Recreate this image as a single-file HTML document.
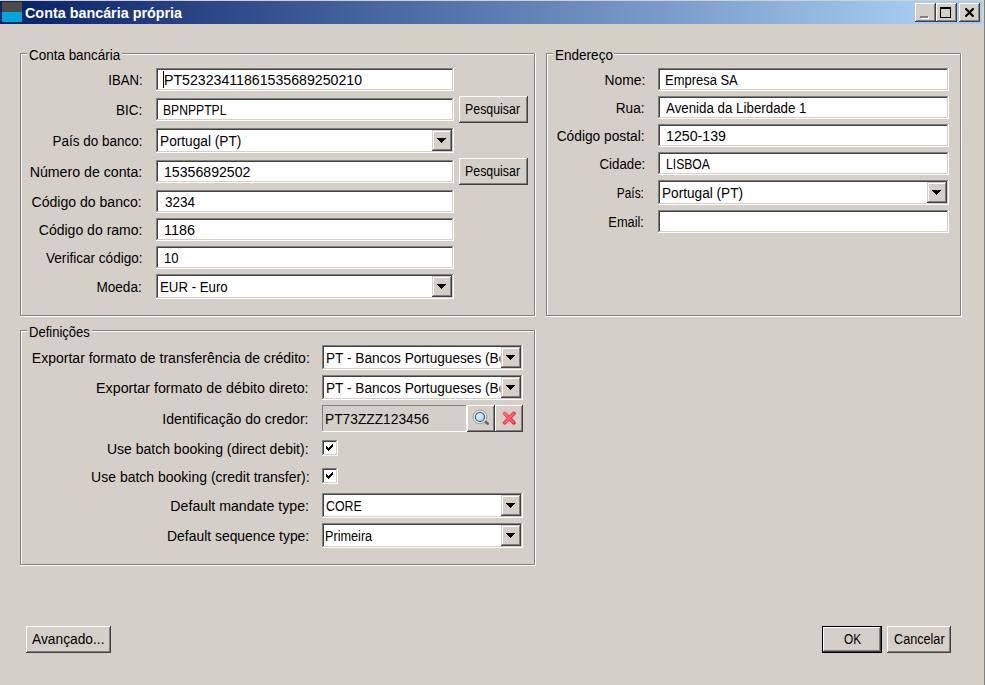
<!DOCTYPE html>
<html lang="pt">
<head>
<meta charset="utf-8">
<title>Conta bancária própria</title>
<style>
html,body{margin:0;padding:0;}
body{width:985px;height:685px;overflow:hidden;background:#d4d0c8;position:relative;
  font-family:"Liberation Sans",Arial,sans-serif;font-size:14px;color:#000;}
*{box-sizing:border-box;}
div,i,b,svg{position:absolute;}
#edge{left:984px;top:0;width:1px;height:685px;background:#808080;}
#title{left:0;top:1px;width:982px;height:23px;background:linear-gradient(to right,#0a246a 0,#0a246a 22px,#a6caf0 915px,#a6caf0 100%);}
#ticon{left:2px;top:1px;width:20px;height:20px;background:#00a5dd;}
#ticon i{left:0;top:0;width:20px;height:10px;background:#4c4c4a;}
.t{white-space:nowrap;}
.tt{color:#fff;font-weight:bold;font-size:15px;}
.cb,.btn{background:#d4d0c8;box-shadow:inset -1px -1px #404040,inset 1px 1px #fff,inset -2px -2px #808080,inset 2px 2px #d4d0c8;}
.cb{top:2px;width:21px;height:19px;}
.mn{left:5px;top:13px;width:8px;height:2px;background:#808080;z-index:2;}
.mn2{left:6px;top:14px;width:8px;height:2px;background:#fff;z-index:1;}
.mx{left:4px;top:4px;width:11px;height:11px;border:1px solid #000;border-top-width:2px;}
.x{left:6px;top:5px;}
.grp{box-shadow:inset -1px -1px #fff,inset 1px 1px #808080,inset -2px -2px #808080,inset 2px 2px #fff;}
.gl{background:#d4d0c8;height:16px;}
.inp,.sel,.chk{background:#fff;box-shadow:inset -1px -1px #fff,inset 1px 1px #808080,inset -2px -2px #d4d0c8,inset 2px 2px #404040;}
.sel{height:25px;}
.sel b{right:2px;top:2px;width:20px;height:21px;background:#d4d0c8;box-shadow:inset -1px -1px #404040,inset 1px 1px #d4d0c8,inset -2px -2px #808080,inset 2px 2px #fff;}
.sel b svg{left:5px;top:8px;}
.okb{background:#000;}
.ro{height:27px;box-shadow:inset -1px -1px #fff,inset 1px 1px #808080;}
.chk{width:16px;height:16px;}
.chk svg{left:4px;top:4px;}
#caret{width:1px;background:#000;}
</style>
</head>
<body>
<div id="title"><div id="ticon"><i></i></div>
<div class="cb" style="left:915px"><i class="mn"></i><i class="mn2"></i></div>
<div class="cb" style="left:936px"><i class="mx"></i></div>
<div class="cb" style="left:959px"><svg class="x" width="9" height="9" viewBox="0 0 9 9"><path d="M1.1 1.1L7.9 7.9M7.9 1.1L1.1 7.9" stroke="#000" stroke-width="2.1" stroke-linecap="square" fill="none"/></svg></div>
</div>
<div id="ttl" class="t tt" style="left:25.22px;top:1px;height:23px;line-height:23px;transform:scaleX(0.9567);transform-origin:left center;">Conta bancária própria</div>
<div id="edge"></div>
<div class="grp" style="left:20px;top:53px;width:516px;height:264px;"></div>
<div class="gl" style="left:27px;top:46px;width:95px;"></div>
<div id="g1" class="t" style="left:29.44px;top:47px;height:16px;line-height:16px;transform:scaleX(0.9608);transform-origin:left center;">Conta bancária</div>
<div class="grp" style="left:546px;top:53px;width:416px;height:264px;"></div>
<div class="gl" style="left:553px;top:46px;width:61px;"></div>
<div id="g2" class="t" style="left:554.85px;top:47px;height:16px;line-height:16px;transform:scaleX(0.9664);transform-origin:left center;">Endereço</div>
<div class="grp" style="left:20px;top:330px;width:516px;height:236px;"></div>
<div class="gl" style="left:27px;top:323px;width:65px;"></div>
<div id="g3" class="t" style="left:29.27px;top:324px;height:16px;line-height:16px;transform:scaleX(0.9312);transform-origin:left center;">Definições</div>
<div id="l1" class="t" style="right:842.93px;top:69px;height:22px;line-height:22px;transform:scaleX(0.9370);transform-origin:right center;">IBAN:</div>
<div id="l2" class="t" style="right:842.66px;top:99px;height:22px;line-height:22px;transform:scaleX(0.9636);transform-origin:right center;">BIC:</div>
<div id="l3" class="t" style="right:842.64px;top:129px;height:24px;line-height:24px;transform:scaleX(0.9622);transform-origin:right center;">País do banco:</div>
<div id="l4" class="t" style="right:842.34px;top:161px;height:22px;line-height:22px;transform:scaleX(1.0119);transform-origin:right center;">Número de conta:</div>
<div id="l5" class="t" style="right:842.84px;top:191px;height:22px;line-height:22px;transform:scaleX(1.0046);transform-origin:right center;">Código do banco:</div>
<div id="l6" class="t" style="right:842.59px;top:219px;height:22px;line-height:22px;transform:scaleX(1.0024);transform-origin:right center;">Código do ramo:</div>
<div id="l7" class="t" style="right:842.89px;top:247px;height:22px;line-height:22px;transform:scaleX(0.9699);transform-origin:right center;">Verificar código:</div>
<div id="l8" class="t" style="right:842.88px;top:275px;height:24px;line-height:24px;transform:scaleX(0.9684);transform-origin:right center;">Moeda:</div>
<div class="inp" style="left:156px;top:68px;width:298px;height:23px;"></div>
<div id="v1" class="t" style="left:164.19px;top:69px;height:22px;line-height:22px;transform:scaleX(1.0108);transform-origin:left center;">PT52323411861535689250210</div>
<div class="inp" style="left:156px;top:98px;width:298px;height:23px;"></div>
<div id="v2" class="t" style="left:162.80px;top:99px;height:22px;line-height:22px;transform:scaleX(0.8678);transform-origin:left center;">BPNPPTPL</div>
<div class="sel" style="left:156px;top:128px;width:298px;"><b><svg width="9" height="5" viewBox="0 0 9 5"><path d="M0 0h9v1h-1v1h-1v1h-1v1h-1v1h-1v-1h-1v-1h-1v-1h-1v-1h-1z" fill="#000"/></svg></b></div>
<div id="v3" class="t" style="left:159.52px;top:129px;height:24px;line-height:24px;transform:scaleX(0.9778);transform-origin:left center;">Portugal (PT)</div>
<div class="inp" style="left:156px;top:160px;width:298px;height:23px;"></div>
<div id="v4" class="t" style="left:163.75px;top:161px;height:22px;line-height:22px;transform:scaleX(1.0089);transform-origin:left center;">15356892502</div>
<div class="inp" style="left:156px;top:190px;width:298px;height:23px;"></div>
<div id="v5" class="t" style="left:164.77px;top:191px;height:22px;line-height:22px;transform:scaleX(0.9668);transform-origin:left center;">3234</div>
<div class="inp" style="left:156px;top:218px;width:298px;height:23px;"></div>
<div id="v6" class="t" style="left:163.98px;top:219px;height:22px;line-height:22px;transform:scaleX(1.0258);transform-origin:left center;">1186</div>
<div class="inp" style="left:156px;top:246px;width:298px;height:23px;"></div>
<div id="v7" class="t" style="left:163.84px;top:247px;height:22px;line-height:22px;transform:scaleX(0.9320);transform-origin:left center;">10</div>
<div class="sel" style="left:156px;top:274px;width:298px;"><b><svg width="9" height="5" viewBox="0 0 9 5"><path d="M0 0h9v1h-1v1h-1v1h-1v1h-1v1h-1v-1h-1v-1h-1v-1h-1v-1h-1z" fill="#000"/></svg></b></div>
<div id="v8" class="t" style="left:159.57px;top:275px;height:24px;line-height:24px;transform:scaleX(0.9464);transform-origin:left center;">EUR - Euro</div>
<div id="caret" style="left:163px;top:71px;height:17px;"></div>
<div class="btn" style="left:459px;top:96px;width:69px;height:27px;"></div>
<div id="b1" class="t" style="left:464.63px;top:96px;height:26px;line-height:26px;transform:scaleX(0.8840);transform-origin:left center;">Pesquisar</div>
<div class="btn" style="left:459px;top:158px;width:69px;height:27px;"></div>
<div id="b2" class="t" style="left:464.63px;top:158px;height:26px;line-height:26px;transform:scaleX(0.8840);transform-origin:left center;">Pesquisar</div>
<div id="r1" class="t" style="right:339.80px;top:69px;height:22px;line-height:22px;transform:scaleX(0.9896);transform-origin:right center;">Nome:</div>
<div id="r2" class="t" style="right:340.07px;top:97px;height:22px;line-height:22px;transform:scaleX(0.9758);transform-origin:right center;">Rua:</div>
<div id="r3" class="t" style="right:340.07px;top:125px;height:22px;line-height:22px;transform:scaleX(0.9812);transform-origin:right center;">Código postal:</div>
<div id="r4" class="t" style="right:339.86px;top:153px;height:22px;line-height:22px;transform:scaleX(0.9483);transform-origin:right center;">Cidade:</div>
<div id="r5" class="t" style="right:340.72px;top:181px;height:24px;line-height:24px;transform:scaleX(0.8491);transform-origin:right center;">País:</div>
<div id="r6" class="t" style="right:340.65px;top:211px;height:22px;line-height:22px;transform:scaleX(0.9137);transform-origin:right center;">Email:</div>
<div class="inp" style="left:658px;top:68px;width:291px;height:23px;"></div>
<div id="w1" class="t" style="left:664.59px;top:69px;height:22px;line-height:22px;transform:scaleX(0.9258);transform-origin:left center;">Empresa SA</div>
<div class="inp" style="left:658px;top:96px;width:291px;height:23px;"></div>
<div id="w2" class="t" style="left:665.51px;top:97px;height:22px;line-height:22px;transform:scaleX(0.9514);transform-origin:left center;">Avenida da Liberdade 1</div>
<div class="inp" style="left:658px;top:124px;width:291px;height:23px;"></div>
<div id="w3" class="t" style="left:665.75px;top:125px;height:22px;line-height:22px;transform:scaleX(1.0129);transform-origin:left center;">1250-139</div>
<div class="inp" style="left:658px;top:152px;width:291px;height:23px;"></div>
<div id="w4" class="t" style="left:665.66px;top:153px;height:22px;line-height:22px;transform:scaleX(0.8676);transform-origin:left center;">LISBOA</div>
<div class="sel" style="left:658px;top:180px;width:291px;"><b><svg width="9" height="5" viewBox="0 0 9 5"><path d="M0 0h9v1h-1v1h-1v1h-1v1h-1v1h-1v-1h-1v-1h-1v-1h-1v-1h-1z" fill="#000"/></svg></b></div>
<div id="w5" class="t" style="left:661.94px;top:181px;height:24px;line-height:24px;transform:scaleX(0.9729);transform-origin:left center;">Portugal (PT)</div>
<div class="inp" style="left:658px;top:210px;width:291px;height:23px;"></div>
<div id="s1" class="t" style="right:675.45px;top:346px;height:24px;line-height:24px;transform:scaleX(1.0005);transform-origin:right center;">Exportar formato de transferência de crédito:</div>
<div id="s2" class="t" style="right:676.18px;top:376px;height:24px;line-height:24px;transform:scaleX(1.0187);transform-origin:right center;">Exportar formato de débito direto:</div>
<div id="s3" class="t" style="right:676.19px;top:406px;height:26px;line-height:26px;transform:scaleX(1.0045);transform-origin:right center;">Identificação do credor:</div>
<div id="s4" class="t" style="right:676.20px;top:441px;height:16px;line-height:16px;transform:scaleX(1.0005);transform-origin:right center;">Use batch booking (direct debit):</div>
<div id="s5" class="t" style="right:675.45px;top:469px;height:16px;line-height:16px;transform:scaleX(0.9995);transform-origin:right center;">Use batch booking (credit transfer):</div>
<div id="s6" class="t" style="right:675.68px;top:494px;height:24px;line-height:24px;transform:scaleX(1.0122);transform-origin:right center;">Default mandate type:</div>
<div id="s7" class="t" style="right:675.96px;top:524px;height:24px;line-height:24px;transform:scaleX(0.9925);transform-origin:right center;">Default sequence type:</div>
<div class="sel" style="left:322px;top:345px;width:201px;"><b><svg width="9" height="5" viewBox="0 0 9 5"><path d="M0 0h9v1h-1v1h-1v1h-1v1h-1v1h-1v-1h-1v-1h-1v-1h-1v-1h-1z" fill="#000"/></svg></b></div>
<div id="x1" class="t" style="left:325.98px;top:346px;height:24px;line-height:24px;transform:scaleX(0.9748);transform-origin:left center;width:178.5px;overflow:hidden;">PT - Bancos Portugueses (Bc</div>
<div class="sel" style="left:322px;top:375px;width:201px;"><b><svg width="9" height="5" viewBox="0 0 9 5"><path d="M0 0h9v1h-1v1h-1v1h-1v1h-1v1h-1v-1h-1v-1h-1v-1h-1v-1h-1z" fill="#000"/></svg></b></div>
<div id="x2" class="t" style="left:325.98px;top:376px;height:24px;line-height:24px;transform:scaleX(0.9748);transform-origin:left center;width:178.5px;overflow:hidden;">PT - Bancos Portugueses (Bc</div>
<div class="ro" style="left:322px;top:405px;width:145px;"></div>
<div id="x3" class="t" style="left:324.83px;top:406px;height:26px;line-height:26px;transform:scaleX(0.9832);transform-origin:left center;">PT73ZZZ123456</div>
<div class="btn" style="left:467px;top:405px;width:28px;height:27px;"><svg width="18" height="18" viewBox="0 0 18 18" style="left:5px;top:4px"><defs><radialGradient id="mg" cx="0.35" cy="0.3" r="0.8"><stop offset="0" stop-color="#f4f8fc"/><stop offset="0.6" stop-color="#c6d6ea"/><stop offset="1" stop-color="#a9c0de"/></radialGradient></defs><path d="M12.4 11.9L15.6 14.5" stroke="#64686a" stroke-width="2.8" stroke-linecap="round"/><circle cx="8" cy="7.9" r="6.9" fill="#eeece8" stroke="#8e8e8a" stroke-width="0.85"/><circle cx="8" cy="7.9" r="4.6" fill="url(#mg)" stroke="#2f66b5" stroke-width="1.25"/></svg></div>
<div class="btn" style="left:495px;top:405px;width:28px;height:27px;"><svg width="16" height="16" viewBox="0 0 16 16" style="left:6px;top:5px"><defs><linearGradient id="dg" x1="0" y1="0" x2="1" y2="1"><stop offset="0" stop-color="#f8505a"/><stop offset="1" stop-color="#e81420"/></linearGradient></defs><path d="M3.6 3.5L12.8 12.8M12.9 3.4L3.6 12.8" stroke="url(#dg)" stroke-width="3.7" stroke-linecap="round" fill="none"/><path d="M3.8 3.7L12.6 12.6M12.7 3.6L3.8 12.6" stroke="#ff7c84" stroke-width="1.5" stroke-linecap="round" fill="none" opacity="0.8"/></svg></div>
<div class="chk" style="left:322px;top:440px;"><svg width="7" height="7" viewBox="0 0 7 7"><path d="M6 0h1v3h-1v1h-1v1h-1v1h-1v1h-1v-1h-1v-1h-1v-3h1v1h1v1h1v-1h1v-1h1v-1h1z" fill="#000"/></svg></div>
<div class="chk" style="left:322px;top:468px;"><svg width="7" height="7" viewBox="0 0 7 7"><path d="M6 0h1v3h-1v1h-1v1h-1v1h-1v1h-1v-1h-1v-1h-1v-3h1v1h1v1h1v-1h1v-1h1v-1h1z" fill="#000"/></svg></div>
<div class="sel" style="left:322px;top:493px;width:201px;"><b><svg width="9" height="5" viewBox="0 0 9 5"><path d="M0 0h9v1h-1v1h-1v1h-1v1h-1v1h-1v-1h-1v-1h-1v-1h-1v-1h-1z" fill="#000"/></svg></b></div>
<div id="x6" class="t" style="left:326.41px;top:494px;height:24px;line-height:24px;transform:scaleX(0.8846);transform-origin:left center;">CORE</div>
<div class="sel" style="left:322px;top:523px;width:201px;"><b><svg width="9" height="5" viewBox="0 0 9 5"><path d="M0 0h9v1h-1v1h-1v1h-1v1h-1v1h-1v-1h-1v-1h-1v-1h-1v-1h-1z" fill="#000"/></svg></b></div>
<div id="x7" class="t" style="left:325.45px;top:524px;height:24px;line-height:24px;transform:scaleX(0.9049);transform-origin:left center;">Primeira</div>
<div class="btn" style="left:26px;top:626px;width:85px;height:27px;"></div>
<div id="b3" class="t" style="left:32.40px;top:626px;height:26px;line-height:26px;transform:scaleX(0.9842);transform-origin:left center;">Avançado...</div>
<div class="okb" style="left:822px;top:626px;width:60px;height:27px;"></div>
<div class="btn" style="left:823px;top:627px;width:58px;height:25px;"></div>
<div id="b4" class="t" style="left:843.58px;top:626px;height:26px;line-height:26px;transform:scaleX(0.8426);transform-origin:left center;">OK</div>
<div class="btn" style="left:887px;top:626px;width:64px;height:27px;"></div>
<div id="b5" class="t" style="left:893.72px;top:626px;height:26px;line-height:26px;transform:scaleX(0.9032);transform-origin:left center;">Cancelar</div>
</body>
</html>
